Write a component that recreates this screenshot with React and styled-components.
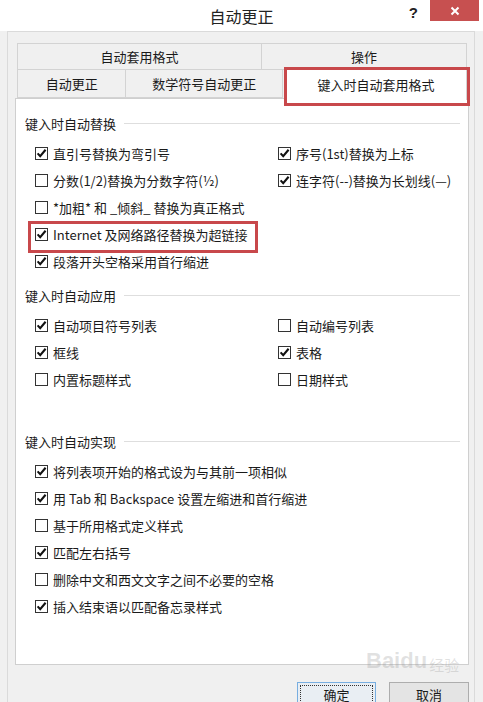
import React from 'react'
import styled, { createGlobalStyle } from 'styled-components'

const font = `"Noto Sans CJK SC", "Noto Sans", sans-serif`
const red = '#c8484b'
const textColor = '#1a1a1a'

const Global = createGlobalStyle`
  html, body {
    margin: 0;
    padding: 0;
  }
  body {
    width: 483px;
    height: 702px;
    overflow: hidden;
    background: #f0f0f0;
    font-family: ${font};
    color: ${textColor};
  }
`

const Window = styled.div`
  position: relative;
  width: 483px;
  height: 702px;
  background: #f0f0f0;
  display: flex;
  flex-direction: column;
`

const TitleBar = styled.div`
  height: 31px;
  flex: none;
  background: #fff;
  display: grid;
  grid-template-columns: 1fr auto 1fr;
`

const Title = styled.div`
  grid-column: 2;
  align-self: center;
  font-size: 16px;
  line-height: 1;
  color: #222;
`

const Controls = styled.div`
  grid-column: 3;
  display: flex;
  justify-content: flex-end;
  align-items: flex-start;
  gap: 12px;
`

const Help = styled.span`
  margin-top: 5px;
  font-family: "Liberation Sans", sans-serif;
  font-weight: bold;
  font-size: 15px;
  line-height: 1;
  color: #222;
`

const Close = styled.div`
  width: 49px;
  height: 21px;
  margin-right: 4px;
  background: #c75050;
  color: #fff;
  display: flex;
  align-items: center;
  justify-content: center;
`

const Frame = styled.div`
  margin-left: 7px;
  width: 468px;
  flex: 1;
  box-sizing: border-box;
  border: 1px solid #dadada;
  border-bottom: none;
  padding: 11px 5px 0 7px;
  display: flex;
  flex-direction: column;
`

const TabStrip = styled.div`
  padding: 0 2px;
  display: flex;
  flex-direction: column;
`

const TabRow = styled.div`
  display: flex;
  align-items: flex-start;
  height: ${p => p.$h}px;
`

const Tab = styled.div`
  position: relative;
  box-sizing: border-box;
  width: ${p => p.$w}px;
  height: ${p => (p.$active ? 32 : p.$h)}px;
  margin: ${p => (p.$active ? '-2px 0 -2px 2px' : '0')};
  z-index: ${p => (p.$active ? 2 : 0)};
  display: flex;
  align-items: center;
  justify-content: center;
  font-size: 13px;
  line-height: 1;
  color: ${textColor};
  background: ${p => (p.$active ? '#fff' : '#f0f0f0')};
  border: 1px solid #d3d3d3;
  border-top: ${p => (p.$top || p.$active ? '1px solid #d3d3d3' : 'none')};
  border-bottom: ${p => (p.$active ? 'none' : '1px solid #d3d3d3')};
  border-left: ${p => (p.$first || p.$active ? '1px solid #d3d3d3' : 'none')};

  ${p =>
    p.$marked &&
    `
    &::after {
      content: '';
      position: absolute;
      top: -2px;
      left: -2px;
      right: -4px;
      bottom: -6px;
      border: 3px solid ${red};
    }
  `}
`

const Panel = styled.div`
  height: 567px;
  box-sizing: border-box;
  background: #fff;
  border: 1px solid #cfcfcf;
  padding: 14px 8px 0 9px;
  display: flex;
  flex-direction: column;
`

const Section = styled.section`
  margin-top: ${p => p.$gap || 0}px;
  display: flex;
  flex-direction: column;
`

const SectionHead = styled.div`
  height: 20px;
  display: flex;
  align-items: center;
  gap: 8px;
  font-size: 13px;
  line-height: 1;

  &::after {
    content: '';
    flex: 1;
    height: 1px;
    background: #dedede;
  }
`

const Options = styled.div`
  margin: 7px 0 0 10px;
  display: grid;
  grid-template-columns: 243px 1fr;
  grid-auto-rows: 27px;
`

const Option = styled.label`
  position: relative;
  justify-self: start;
  display: flex;
  align-items: center;
  gap: 5px;
  font-size: 13px;
  line-height: 1;
  white-space: nowrap;

  ${p =>
    p.$marked &&
    `
    &::after {
      content: '';
      position: absolute;
      top: 0;
      bottom: -5px;
      left: -7px;
      right: -10px;
      border: 3px solid ${red};
    }
  `}
`

const Box = styled.span`
  width: 13px;
  height: 13px;
  flex: none;
  box-sizing: border-box;
  border: 1px solid #333;
  background: #fff;
  display: flex;
  align-items: center;
  justify-content: center;
`

const Buttons = styled.div`
  margin-top: 17px;
  display: flex;
  justify-content: flex-end;
  gap: 13px;
`

const Button = styled.div`
  width: ${p => p.$w}px;
  height: 24px;
  box-sizing: border-box;
  display: flex;
  align-items: center;
  justify-content: center;
  font-size: 13px;
  line-height: 1;
  color: ${textColor};
  background: ${p => (p.$primary ? '#e9eef3' : '#e4e4e4')};
  border: 1px solid ${p => (p.$primary ? '#78aee0' : '#adadad')};
  outline: ${p => (p.$primary ? '1px dotted #333' : 'none')};
  outline-offset: -4px;
`

const Watermark = styled.div`
  position: absolute;
  left: 366px;
  top: 650px;
  display: flex;
  align-items: flex-end;
  gap: 2px;
  color: rgba(150, 150, 150, 0.28);
  font-family: "Liberation Sans", sans-serif;
  font-weight: bold;
  font-size: 22px;
  line-height: 1;
  pointer-events: none;

  small {
    font-family: ${font};
    font-size: 15px;
    font-weight: normal;
  }
`

const Check = () => (
  <svg width="11" height="11" viewBox="0 0 11 11">
    <path d="M1.6 5.4 L4.2 8.2 L9.6 1.8" fill="none" stroke="#111" strokeWidth="2.1" />
  </svg>
)

const CloseIcon = () => (
  <svg width="10" height="10" viewBox="0 0 10 10">
    <path d="M1.5 1.5 L8.5 8.5 M8.5 1.5 L1.5 8.5" stroke="#fff" strokeWidth="2" />
  </svg>
)

const sections = [
  {
    title: '键入时自动替换',
    gap: 0,
    items: [
      { text: '直引号替换为弯引号', on: true },
      { text: '序号(1st)替换为上标', on: true },
      { text: '分数(1/2)替换为分数字符(½)', on: false },
      { text: '连字符(--)替换为长划线(—)', on: true },
      { text: '*加粗* 和 _倾斜_ 替换为真正格式', on: false },
      null,
      { text: 'Internet 及网络路径替换为超链接', on: true, marked: true },
      null,
      { text: '段落开头空格采用首行缩进', on: true },
      null,
    ],
  },
  {
    title: '键入时自动应用',
    gap: 10,
    items: [
      { text: '自动项目符号列表', on: true },
      { text: '自动编号列表', on: false },
      { text: '框线', on: true },
      { text: '表格', on: true },
      { text: '内置标题样式', on: false },
      { text: '日期样式', on: false },
    ],
  },
  {
    title: '键入时自动实现',
    gap: 38,
    items: [
      { text: '将列表项开始的格式设为与其前一项相似', on: true },
      null,
      { text: '用 Tab 和 Backspace 设置左缩进和首行缩进', on: true },
      null,
      { text: '基于所用格式定义样式', on: false },
      null,
      { text: '匹配左右括号', on: true },
      null,
      { text: '删除中文和西文文字之间不必要的空格', on: false },
      null,
      { text: '插入结束语以匹配备忘录样式', on: true },
      null,
    ],
  },
]

export default function App() {
  return (
    <Window>
      <Global />
      <TitleBar>
        <Title>自动更正</Title>
        <Controls>
          <Help>?</Help>
          <Close>
            <CloseIcon />
          </Close>
        </Controls>
      </TitleBar>
      <Frame>
        <TabStrip>
          <TabRow $h={27}>
            <Tab $w={245} $h={27} $top $first>自动套用格式</Tab>
            <Tab $w={205} $h={27} $top>操作</Tab>
          </TabRow>
          <TabRow $h={28}>
            <Tab $w={110} $h={28} $first>自动更正</Tab>
            <Tab $w={158} $h={28}>数学符号自动更正</Tab>
            <Tab $w={183} $active $marked>键入时自动套用格式</Tab>
          </TabRow>
        </TabStrip>
        <Panel>
          {sections.map(s => (
            <Section key={s.title} $gap={s.gap}>
              <SectionHead>{s.title}</SectionHead>
              <Options>
                {s.items.map((it, i) =>
                  it ? (
                    <Option key={i} $marked={it.marked}>
                      <Box>{it.on && <Check />}</Box>
                      {it.text}
                    </Option>
                  ) : (
                    <span key={i} />
                  )
                )}
              </Options>
            </Section>
          ))}
        </Panel>
        <Buttons>
          <Button $w={79} $primary>确定</Button>
          <Button $w={80}>取消</Button>
        </Buttons>
      </Frame>
      <Watermark>
        Baidu<small>经验</small>
      </Watermark>
    </Window>
  )
}
